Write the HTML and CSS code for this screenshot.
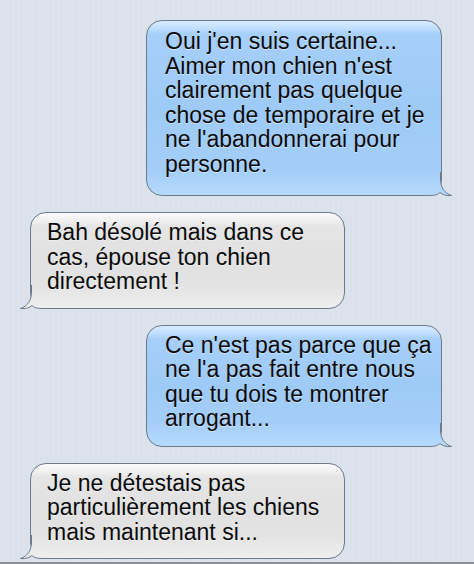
FILE: index.html
```html
<!DOCTYPE html>
<html lang="fr">
<head>
  <meta charset="UTF-8">
  <meta name="viewport" content="width=device-width, initial-scale=1.0">
  <title>Messages</title>
  <link rel="stylesheet" href="styles.css">
</head>
<body>

  <!-- dégradés partagés pour les queues des bulles -->
  <svg class="defs" width="0" height="0">
    <defs>
      <linearGradient id="tailBlue" gradientUnits="userSpaceOnUse" x1="0" y1="0" x2="0" y2="23">
        <stop offset="0" stop-color="#a4cef9"/>
        <stop offset="1" stop-color="#b6dafc"/>
      </linearGradient>
      <linearGradient id="tailGray" gradientUnits="userSpaceOnUse" x1="0" y1="0" x2="0" y2="23">
        <stop offset="0" stop-color="#e3e3e3"/>
        <stop offset="1" stop-color="#efefef"/>
      </linearGradient>
    </defs>
  </svg>

  <div class="thread">
    <div class="bubble sent wide">
      Oui j'en suis certaine...<br>
      Aimer mon chien n'est<br>
      clairement pas quelque<br>
      chose de temporaire et je<br>
      ne l'abandonnerai pour<br>
      personne.
      <svg class="tail" viewBox="0 0 26 24" width="26" height="24">
        <path class="tail-fill" d="M0,0 H13.5 V7 C13.5,15 17,21 24.5,23.5 C19,24.2 15.5,22.5 13,20.5 C11,22.5 8,23.5 3,23.5 H0 Z"/>
        <path class="tail-line" d="M13.5,0 V7 C13.5,15 17,21 24.5,23.5 C19,24.2 15.5,22.5 13,20.5 C11,22.5 8,23.5 3,23.5 H0"/>
      </svg>
    </div>

    <div class="bubble received">
      Bah désolé mais dans ce<br>
      cas, épouse ton chien<br>
      directement !
      <svg class="tail" viewBox="0 0 26 24" width="26" height="24">
        <path class="tail-fill" d="M0,0 H13.5 V7 C13.5,15 17,21 24.5,23.5 C19,24.2 15.5,22.5 13,20.5 C11,22.5 8,23.5 3,23.5 H0 Z"/>
        <path class="tail-line" d="M13.5,0 V7 C13.5,15 17,21 24.5,23.5 C19,24.2 15.5,22.5 13,20.5 C11,22.5 8,23.5 3,23.5 H0"/>
      </svg>
    </div>

    <div class="bubble sent">
      Ce n'est pas parce que ça<br>
      ne l'a pas fait entre nous<br>
      que tu dois te montrer<br>
      arrogant...
      <svg class="tail" viewBox="0 0 26 24" width="26" height="24">
        <path class="tail-fill" d="M0,0 H13.5 V7 C13.5,15 17,21 24.5,23.5 C19,24.2 15.5,22.5 13,20.5 C11,22.5 8,23.5 3,23.5 H0 Z"/>
        <path class="tail-line" d="M13.5,0 V7 C13.5,15 17,21 24.5,23.5 C19,24.2 15.5,22.5 13,20.5 C11,22.5 8,23.5 3,23.5 H0"/>
      </svg>
    </div>

    <div class="bubble received">
      Je ne détestais pas<br>
      particulièrement les chiens<br>
      mais maintenant si...
      <svg class="tail" viewBox="0 0 26 24" width="26" height="24">
        <path class="tail-fill" d="M0,0 H13.5 V7 C13.5,15 17,21 24.5,23.5 C19,24.2 15.5,22.5 13,20.5 C11,22.5 8,23.5 3,23.5 H0 Z"/>
        <path class="tail-line" d="M13.5,0 V7 C13.5,15 17,21 24.5,23.5 C19,24.2 15.5,22.5 13,20.5 C11,22.5 8,23.5 3,23.5 H0"/>
      </svg>
    </div>
  </div>

  <div class="bottom-line"></div>

</body>
</html>
```

FILE: styles.css
```css
body {
  margin: 0;
  height: 564px;
  overflow: hidden;
  display: flex;
  flex-direction: column;
  font-family: "Liberation Sans", Arial, sans-serif;
  color: #0a0a0a;
  background-color: #dbe2eb;
  background-image: repeating-linear-gradient(90deg, #dae1ea 0 2px, #dce3ec 2px 5px);
}
.defs {
  position: absolute;
}
.thread {
  flex: 1;
  display: flex;
  flex-direction: column;
  gap: 16px;
  padding: 20px 32px 0 30px;
}
.bubble {
  position: relative;
  font-size: 23px;
  line-height: 24.5px;
  white-space: nowrap;
  border: 1px solid #6c7a8c;
  border-radius: 16px;
  text-shadow: 0 1px 0 rgba(255, 255, 255, 0.45);
}
.sent {
  align-self: flex-end;
  width: 276px;
  padding: 7px 0 15px 18px;
  background: linear-gradient(180deg, #d8ebfe 0, #c2dffd 7px, #a6cffa 13px, #9ecaf8 50%, #a4cef9 calc(100% - 23px), #b6dafc 100%);
}
.sent.wide {
  padding: 8px 0 19px 18px;
}
.received {
  align-self: flex-start;
  width: 297px;
  padding: 7px 0 14px 16px;
  background: linear-gradient(180deg, #fbfbfb 0, #f2f2f2 7px, #e5e5e5 13px, #e1e1e1 50%, #e3e3e3 calc(100% - 23px), #efefef 100%);
}
.tail {
  position: absolute;
  bottom: -1px;
  right: -12px;
  overflow: visible;
}
.received .tail {
  right: auto;
  left: -12px;
  transform: scaleX(-1);
}
.tail-fill {
  stroke: none;
}
.sent .tail-fill {
  fill: url(#tailBlue);
}
.received .tail-fill {
  fill: url(#tailGray);
}
.tail-line {
  fill: none;
  stroke: #6c7a8c;
  stroke-width: 1;
}
.bottom-line {
  height: 2px;
  background-color: #8c9096;
}
```
